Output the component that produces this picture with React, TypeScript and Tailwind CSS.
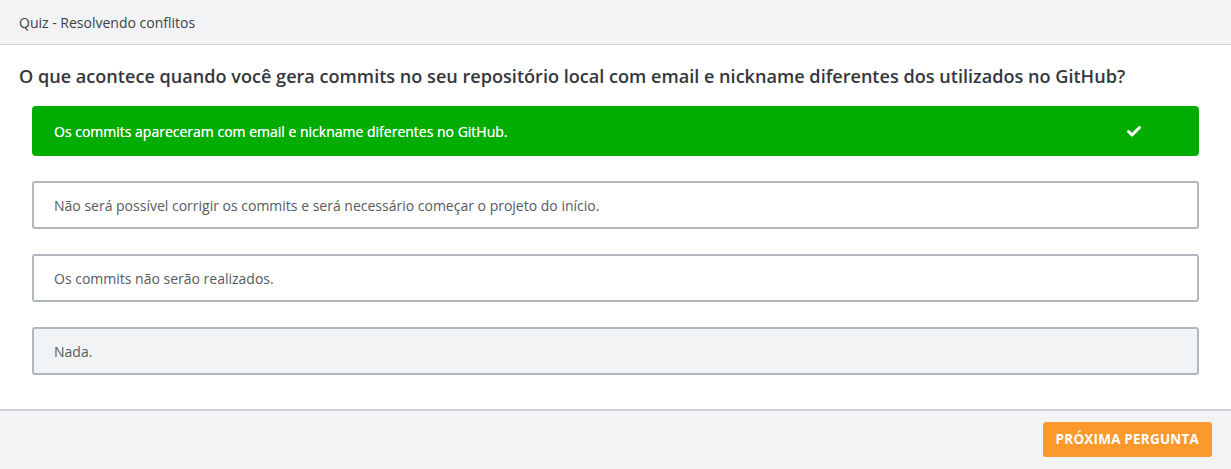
import React from "react";

const options = [
  { text: "Os commits apareceram com email e nickname diferentes no GitHub.", state: "correct" },
  { text: "Não será possível corrigir os commits e será necessário começar o projeto do início.", state: "idle" },
  { text: "Os commits não serão realizados.", state: "idle" },
  { text: "Nada.", state: "hover" },
];

function Check() {
  return (
    <svg width="14" height="11" viewBox="0 0 14 11" className="mr-[58px]">
      <path d="M1.5 5.5 L5 9 L12.5 1.5" fill="none" stroke="white" strokeWidth="3" strokeLinecap="round" strokeLinejoin="round" />
    </svg>
  );
}

export default function App() {
  return (
    <div className="w-[1231px] h-[469px] bg-white flex flex-col font-['Open_Sans',sans-serif] text-[#343a40]">
      <div className="h-[45px] bg-[#f2f3f5] border-b border-[#d0d3d7] flex items-center px-[19px] text-[14px] text-[#3d3f4a]">
        Quiz - Resolvendo conflitos
      </div>
      <div className="flex-1 px-[19px] pt-[17px]">
        <h1 className="text-[18.1px] font-semibold text-[#33373d] leading-[28px] mb-[16px]">
          O que acontece quando você gera commits no seu repositório local com email e nickname diferentes dos utilizados no GitHub?
        </h1>
        <div className="flex flex-col gap-[25px] px-[13px]">
          {options.map((o) =>
            o.state === "correct" ? (
              <div key={o.text} className="h-[50px] rounded-[4px] bg-[#00ad00] flex items-center justify-between pl-[22px] text-[14px] font-normal text-white">
                <span className="[text-shadow:0_0_0.4px_white]">{o.text}</span>
                <Check />
              </div>
            ) : (
              <div
                key={o.text}
                className={`h-[48px] rounded-[3px] border-2 border-[#b0b7be] flex items-center pl-[20px] text-[14px] text-[#555b61] ${o.state === "hover" ? "bg-[#f2f3f5]" : "bg-white"}`}
              >
                {o.text}
              </div>
            )
          )}
        </div>
      </div>
      <div className="h-[60px] bg-[#f2f3f5] border-t-2 border-[#cfd2d6] flex items-center justify-end pr-[19px]">
        <button className="h-[35px] px-[13px] rounded-[3px] bg-[#fc992c] text-white text-[13.5px] font-bold tracking-[0.2px] -mt-[2px]">
          PRÓXIMA PERGUNTA
        </button>
      </div>
    </div>
  );
}
